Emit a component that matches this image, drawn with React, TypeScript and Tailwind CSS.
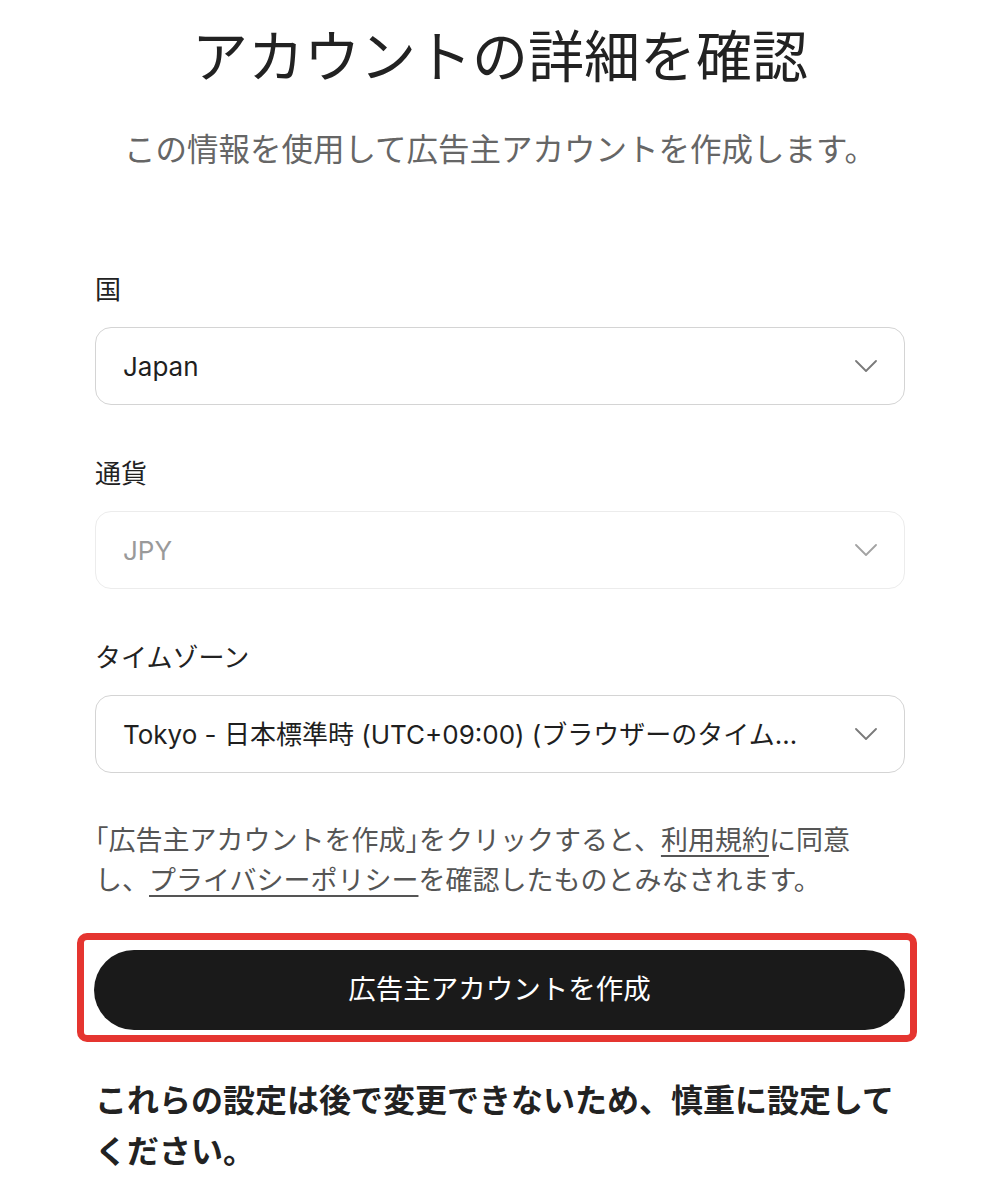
import React from 'react';

const fontStack = "font-['Inter','Noto_Sans_CJK_JP',sans-serif]";

function Chevron({ muted }: { muted?: boolean }) {
  return (
    <svg
      width="22"
      height="12"
      viewBox="0 0 22 12"
      fill="none"
      className="shrink-0"
    >
      <polyline
        points="1,1 11,11 21,1"
        stroke={muted ? '#a3a3a3' : '#7a7a7a'}
        strokeWidth="1.8"
        strokeLinecap="round"
        strokeLinejoin="round"
      />
    </svg>
  );
}

function SelectField({
  label,
  value,
  disabled,
}: {
  label: string;
  value: string;
  disabled?: boolean;
}) {
  return (
    <div className="flex flex-col">
      <label className="text-[26px] leading-[36px] text-[#222222] mb-[19px]">{label}</label>
      <div
        className={
          disabled
            ? 'h-[78px] rounded-[16px] border border-[#ececec] bg-white flex items-center pl-[27px] pr-[27px]'
            : 'h-[78px] rounded-[16px] border border-[#d4d4d4] bg-white flex items-center pl-[27px] pr-[27px]'
        }
      >
        <span
          className={
            disabled
              ? 'flex-1 min-w-0 truncate text-[26px] text-[#9a9a9a] mr-[34px]'
              : 'flex-1 min-w-0 truncate text-[26px] text-[#1f1f1f] mr-[34px]'
          }
        >
          {value}
        </span>
        <Chevron muted={disabled} />
      </div>
    </div>
  );
}

export default function App() {
  return (
    <div className={`min-h-[1199px] bg-white ${fontStack}`}>
      <div className="w-[810px] ml-[95px] pt-[23px] pb-[30px]">
        <h1 className="text-center text-[56px] leading-[68px] font-normal text-[#222222]">
          アカウントの詳細を確認
        </h1>
        <p className="text-center text-[31.5px] leading-[40px] text-[#666666] mt-[39px]">
          この情報を使用して広告主アカウントを作成します。
        </p>

        <div className="flex flex-col gap-[51px] mt-[102px]">
          <SelectField label="国" value="Japan" />
          <SelectField label="通貨" value="JPY" disabled />
          <SelectField
            label="タイムゾーン"
            value="Tokyo - 日本標準時 (UTC+09:00) (ブラウザーのタイムゾーン)"
          />
        </div>

        <p className="mt-[48px] max-w-[790px] text-[27px] leading-[40px] text-[#555555]">
          <span className="[font-feature-settings:'halt']">「</span>広告主アカウントを作成
          <span className="[font-feature-settings:'halt']">」</span>をクリックすると、
          <a href="#" className="underline underline-offset-[5px] decoration-[1.5px]">
            利用規約
          </a>
          に同意し、
          <a href="#" className="underline underline-offset-[5px] decoration-[1.5px]">
            プライバシーポリシー
          </a>
          を確認したものとみなされます。
        </p>

        {/* highlighted submit button */}
        <div className="mt-[32px] ml-[-18px] mr-[-12px] border-[7px] border-[#e53530] rounded-[10px] pt-[10px] pl-[10px] pb-[5px] pr-[5px]">
          <button className="w-full h-[80px] rounded-full bg-[#1a1a1a] text-white text-[27.5px] flex items-center justify-center">
            広告主アカウントを作成
          </button>
        </div>

        <p className="mt-[33px] text-[32px] leading-[51px] font-bold text-[#222222]">
          これらの設定は後で変更できないため、慎重に設定してください。
        </p>
      </div>
    </div>
  );
}
